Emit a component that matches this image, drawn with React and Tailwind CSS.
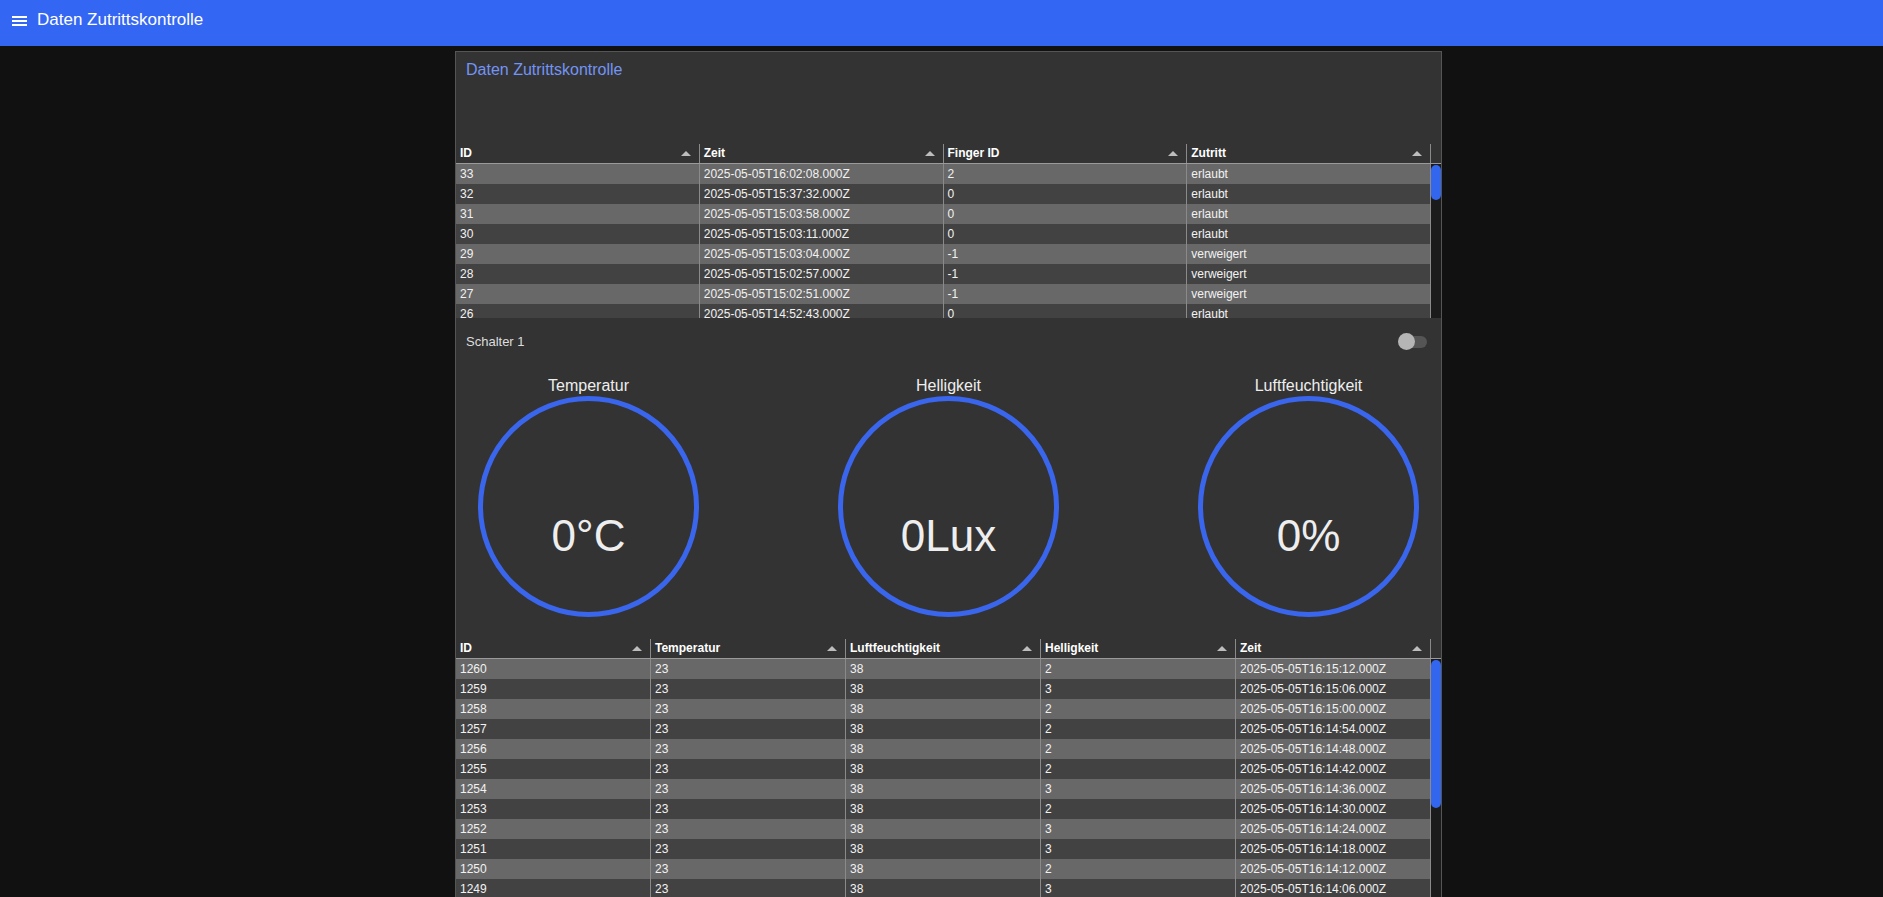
import React from 'react';

const accessRows = [
    ['33', '2025-05-05T16:02:08.000Z', '2', 'erlaubt'],
    ['32', '2025-05-05T15:37:32.000Z', '0', 'erlaubt'],
    ['31', '2025-05-05T15:03:58.000Z', '0', 'erlaubt'],
    ['30', '2025-05-05T15:03:11.000Z', '0', 'erlaubt'],
    ['29', '2025-05-05T15:03:04.000Z', '-1', 'verweigert'],
    ['28', '2025-05-05T15:02:57.000Z', '-1', 'verweigert'],
    ['27', '2025-05-05T15:02:51.000Z', '-1', 'verweigert'],
    ['26', '2025-05-05T14:52:43.000Z', '0', 'erlaubt'],
    ['25', '2025-05-05T14:52:30.000Z', '0', 'erlaubt'],
];

const sensorRows = [
    ['1260', '23', '38', '2', '2025-05-05T16:15:12.000Z'],
    ['1259', '23', '38', '3', '2025-05-05T16:15:06.000Z'],
    ['1258', '23', '38', '2', '2025-05-05T16:15:00.000Z'],
    ['1257', '23', '38', '2', '2025-05-05T16:14:54.000Z'],
    ['1256', '23', '38', '2', '2025-05-05T16:14:48.000Z'],
    ['1255', '23', '38', '2', '2025-05-05T16:14:42.000Z'],
    ['1254', '23', '38', '3', '2025-05-05T16:14:36.000Z'],
    ['1253', '23', '38', '2', '2025-05-05T16:14:30.000Z'],
    ['1252', '23', '38', '3', '2025-05-05T16:14:24.000Z'],
    ['1251', '23', '38', '3', '2025-05-05T16:14:18.000Z'],
    ['1250', '23', '38', '2', '2025-05-05T16:14:12.000Z'],
    ['1249', '23', '38', '3', '2025-05-05T16:14:06.000Z'],
    ['1248', '23', '38', '2', '2025-05-05T16:14:00.000Z'],
];

function SortArrow() {
    return (
        <svg width="10" height="5" viewBox="0 0 10 5" className="absolute right-[8px] top-[7px]">
            <polygon points="0,5 5,0 10,5" fill="#bdbdbd" />
        </svg>
    );
}

// simple striped table with a fake scrollbar on the right
function DataTable({ columns, rows, gridClass, bodyHeight, thumbHeight }) {
    return (
        <div className="flex flex-col">
            <div className="flex">
                <div className={`grid ${gridClass} w-[975px] border-b border-[#9a9a9a]`}>
                    {columns.map(col => (
                        <div key={col} className="relative h-[19px] border-r border-[#8a8a8a] px-1 text-[12px] leading-[19px] font-bold text-white">
                            {col}
                            <SortArrow />
                        </div>
                    ))}
                </div>
                <div className="w-[10px] border-b border-[#9a9a9a]" />
            </div>
            <div className="flex overflow-hidden" style={{ height: bodyHeight }}>
                <div className="w-[975px]">
                    {rows.map((row, i) => (
                        <div key={i} className={`grid ${gridClass} ${i % 2 === 0 ? 'bg-[#686868]' : 'bg-[#424242]'}`}>
                            {row.map((cell, j) => (
                                <div key={j} className="h-[20px] border-r border-[#8a8a8a] px-1 text-[12px] leading-[20px] text-[#f2f2f2] whitespace-nowrap">
                                    {cell}
                                </div>
                            ))}
                        </div>
                    ))}
                </div>
                <div className="w-[10px] bg-[#1b1b1b] pt-[1px]">
                    <div className="w-[10px] rounded-full bg-[#3366ee]" style={{ height: thumbHeight }} />
                </div>
            </div>
        </div>
    );
}

function Gauge({ label, value }) {
    return (
        <div className="flex w-[221px] flex-col items-center">
            <div className="h-[19px] text-[16px] leading-[18px] text-[#eeeeee]">{label}</div>
            <svg width="221" height="221" viewBox="0 0 221 221">
                <circle cx="110.5" cy="110.5" r="108" fill="none" stroke="#3a66ee" strokeWidth="5" />
                <text x="110.5" y="155" textAnchor="middle" fontSize="44" fill="#eeeeee" fontFamily="'Liberation Sans', Arial, sans-serif">
                    {value}
                </text>
            </svg>
        </div>
    );
}

export default function App() {
    return (
        <div className="h-screen overflow-hidden bg-[#111111] font-['Liberation_Sans',Arial,sans-serif]">
            {/* TOP BAR */}
            <header className="flex h-[46px] items-start gap-[9px] bg-[#3366f2] pl-[12px] pt-[10px]">
                <svg width="16" height="14" viewBox="0 0 16 14" className="mt-[6px]">
                    <rect x="0" y="0" width="15" height="2" fill="#ffffff" />
                    <rect x="0" y="4" width="15" height="2" fill="#ffffff" />
                    <rect x="0" y="8" width="15" height="2" fill="#ffffff" />
                </svg>
                <span className="text-[17px] leading-[20px] text-white">Daten Zutrittskontrolle</span>
            </header>

            <div className="pl-[455px] pt-[5px]">
                <div className="w-[987px] border border-[#555555] bg-[#333333]">
                    <div className="h-[92px] pl-[10px] pt-[6px]">
                        <span className="text-[16px] leading-[18px] text-[#7394f4]">Daten Zutrittskontrolle</span>
                    </div>

                    <DataTable
                        columns={['ID', 'Zeit', 'Finger ID', 'Zutritt']}
                        rows={accessRows}
                        gridClass="grid-cols-4"
                        bodyHeight={154}
                        thumbHeight={35}
                    />

                    {/* SWITCH */}
                    <div className="flex h-[48px] items-center justify-between pl-[10px] pr-[14px]">
                        <span className="text-[13px] text-[#dddddd]">Schalter 1</span>
                        <div className="relative h-[12px] w-[28px] rounded-full bg-[#555555]">
                            <div className="absolute left-[-1px] top-[-3px] h-[17px] w-[17px] rounded-full bg-[#b5b5b5]" />
                        </div>
                    </div>

                    {/* GAUGES */}
                    <div className="flex justify-between px-[22px] pb-[22px] pt-[11px]">
                        <Gauge label="Temperatur" value="0°C" />
                        <Gauge label="Helligkeit" value="0Lux" />
                        <Gauge label="Luftfeuchtigkeit" value="0%" />
                    </div>

                    <DataTable
                        columns={['ID', 'Temperatur', 'Luftfeuchtigkeit', 'Helligkeit', 'Zeit']}
                        rows={sensorRows}
                        gridClass="grid-cols-5"
                        bodyHeight={300}
                        thumbHeight={148}
                    />
                </div>
            </div>
        </div>
    );
}
